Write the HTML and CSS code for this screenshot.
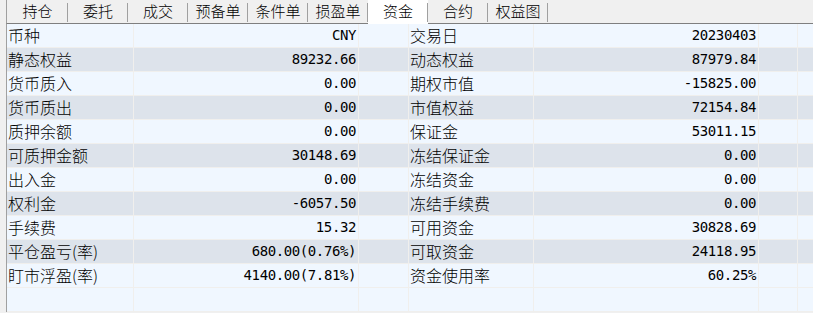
FILE: index.html
```html
<!DOCTYPE html>
<html lang="zh-CN">
<head>
    <meta charset="UTF-8">
    <title>资金</title>
    <link rel="stylesheet" href="styles.css">
</head>
<body>
    <div class="tabs">
        <div class="tab first">持仓</div>
        <div class="tab">委托</div>
        <div class="tab">成交</div>
        <div class="tab">预备单</div>
        <div class="tab">条件单</div>
        <div class="tab">损盈单</div>
        <div class="tab active">资金</div>
        <div class="tab">合约</div>
        <div class="tab">权益图</div>
    </div>

    <div class="grid">
        <div class="row light">
            <div class="cell label">币种</div><div class="cell num">CNY</div><div class="cell"></div>
            <div class="cell label">交易日</div><div class="cell num">20230403</div><div class="cell"></div><div class="cell last"></div>
        </div>
        <div class="row dark">
            <div class="cell label">静态权益</div><div class="cell num">89232.66</div><div class="cell"></div>
            <div class="cell label">动态权益</div><div class="cell num">87979.84</div><div class="cell"></div><div class="cell last"></div>
        </div>
        <div class="row light">
            <div class="cell label">货币质入</div><div class="cell num">0.00</div><div class="cell"></div>
            <div class="cell label">期权市值</div><div class="cell num">-15825.00</div><div class="cell"></div><div class="cell last"></div>
        </div>
        <div class="row dark">
            <div class="cell label">货币质出</div><div class="cell num">0.00</div><div class="cell"></div>
            <div class="cell label">市值权益</div><div class="cell num">72154.84</div><div class="cell"></div><div class="cell last"></div>
        </div>
        <div class="row light">
            <div class="cell label">质押余额</div><div class="cell num">0.00</div><div class="cell"></div>
            <div class="cell label">保证金</div><div class="cell num">53011.15</div><div class="cell"></div><div class="cell last"></div>
        </div>
        <div class="row dark">
            <div class="cell label">可质押金额</div><div class="cell num">30148.69</div><div class="cell"></div>
            <div class="cell label">冻结保证金</div><div class="cell num">0.00</div><div class="cell"></div><div class="cell last"></div>
        </div>
        <div class="row light">
            <div class="cell label">出入金</div><div class="cell num">0.00</div><div class="cell"></div>
            <div class="cell label">冻结资金</div><div class="cell num">0.00</div><div class="cell"></div><div class="cell last"></div>
        </div>
        <div class="row dark">
            <div class="cell label">权利金</div><div class="cell num">-6057.50</div><div class="cell"></div>
            <div class="cell label">冻结手续费</div><div class="cell num">0.00</div><div class="cell"></div><div class="cell last"></div>
        </div>
        <div class="row light">
            <div class="cell label">手续费</div><div class="cell num">15.32</div><div class="cell"></div>
            <div class="cell label">可用资金</div><div class="cell num">30828.69</div><div class="cell"></div><div class="cell last"></div>
        </div>
        <div class="row dark">
            <div class="cell label">平仓盈亏(率)</div><div class="cell num">680.00(0.76%)</div><div class="cell"></div>
            <div class="cell label">可取资金</div><div class="cell num">24118.95</div><div class="cell"></div><div class="cell last"></div>
        </div>
        <div class="row light">
            <div class="cell label">盯市浮盈(率)</div><div class="cell num">4140.00(7.81%)</div><div class="cell"></div>
            <div class="cell label">资金使用率</div><div class="cell num">60.25%</div><div class="cell"></div><div class="cell last"></div>
        </div>
        <div class="row light">
            <div class="cell label"></div><div class="cell num"></div><div class="cell"></div>
            <div class="cell label"></div><div class="cell num"></div><div class="cell"></div><div class="cell last"></div>
        </div>
    </div>
</body>
</html>
```

FILE: styles.css
```css
body {
    margin: 0;
    background-color: #f0f0f0;
    font-family: "Noto Sans CJK SC", sans-serif;
    font-weight: 300;
    color: #000;
    overflow: hidden;
}

.tabs {
    display: flex;
    height: 23px;
    padding-left: 6px;
    background-color: #f0f0f0;
}

.tab {
    width: 60px;
    box-sizing: border-box;
    height: 23px;
    line-height: 22px;
    font-size: 15px;
    text-align: center;
    position: relative;
}

.tab::after {
    content: "";
    position: absolute;
    right: 0;
    top: 3px;
    height: 19px;
    width: 1px;
    background-color: #a0a0a0;
}

.tab.first {
    width: 62px;
    border-left: 1px solid #a0a0a0;
}

.tab.active {
    background-color: #ffffff;
    height: 24px;
    z-index: 1;
}

.grid {
    margin-left: 6px;
    border-left: 1px solid #a0a0a0;
    border-top: 1px solid #7f7f7f;
}

.row {
    display: grid;
    grid-template-columns: 127px 225px 50px 125px 225px 39px 1fr;
    height: 24px;
}

.row.light {
    background-color: #f0f7ff;
}

.row.dark {
    background-color: #dde3eb;
}

.cell {
    box-sizing: border-box;
    height: 24px;
    line-height: 23px;
    border-right: 1px solid #f0efed;
    border-bottom: 1px solid #f0efed;
    white-space: nowrap;
    overflow: hidden;
}

.cell.last {
    border-right: none;
}

.label {
    font-size: 16px;
    padding-left: 1px;
}

.num {
    font-family: "DejaVu Sans Mono", monospace;
    font-weight: normal;
    font-size: 14px;
    letter-spacing: -0.4px;
    text-align: right;
    padding-right: 2px;
}
```
